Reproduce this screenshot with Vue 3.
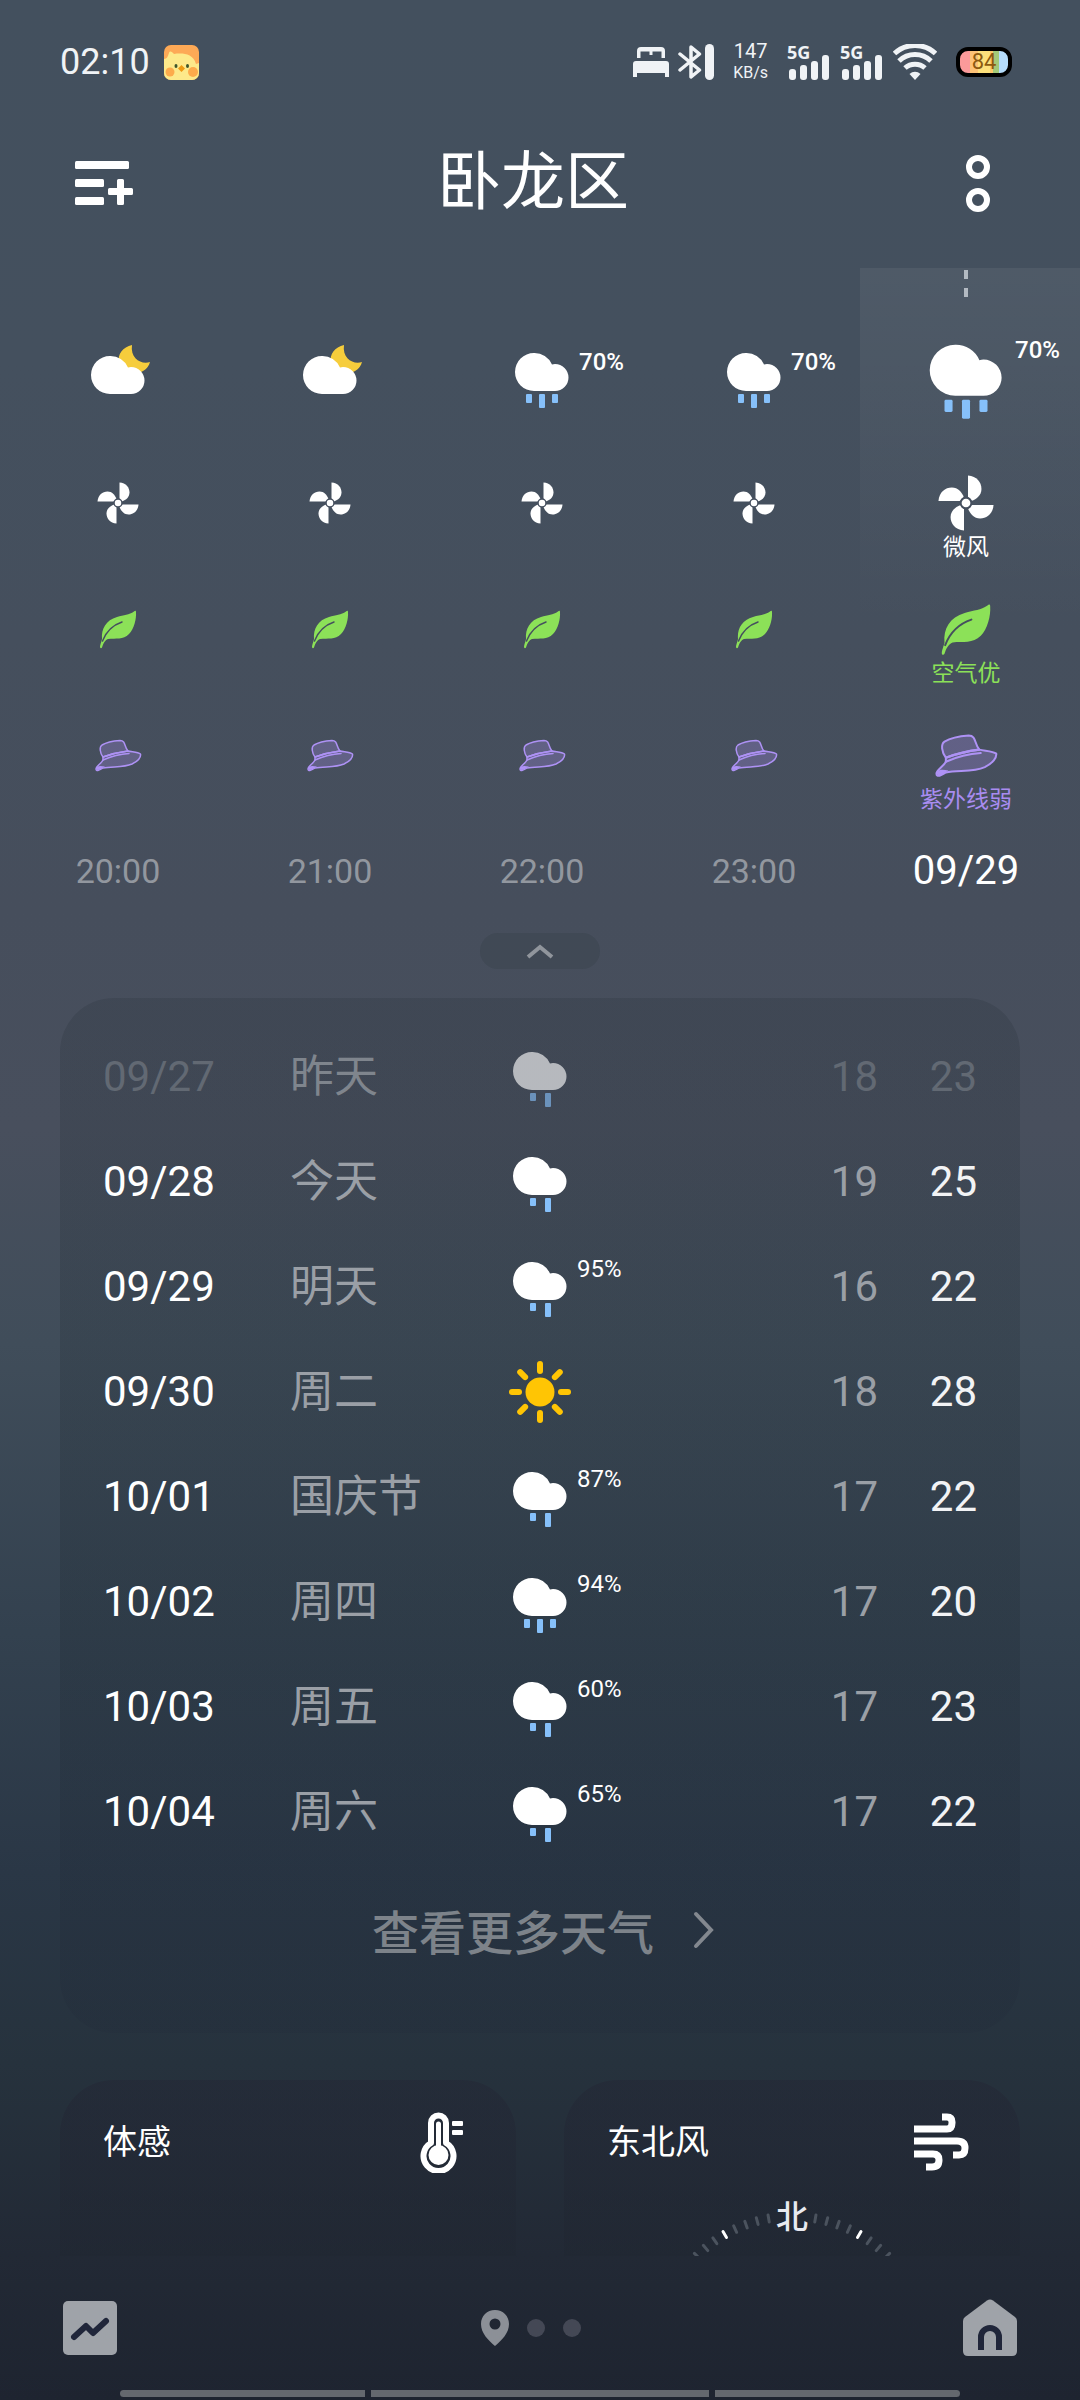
<script setup>
const hours = [
  { time: '20:00', icon: 'night' },
  { time: '21:00', icon: 'night' },
  { time: '22:00', icon: 'rain', chance: '70%' },
  { time: '23:00', icon: 'rain', chance: '70%' },
  { time: '09/29', icon: 'rain', chance: '70%', current: true, wind: '微风', air: '空气优', uv: '紫外线弱' },
]

const days = [
  { date: '09/27', name: '昨天', icon: 'drizzle', low: 18, high: 23, past: true },
  { date: '09/28', name: '今天', icon: 'drizzle', low: 19, high: 25 },
  { date: '09/29', name: '明天', icon: 'drizzle', chance: '95%', low: 16, high: 22 },
  { date: '09/30', name: '周二', icon: 'sun', low: 18, high: 28 },
  { date: '10/01', name: '国庆节', icon: 'drizzle', chance: '87%', low: 17, high: 22 },
  { date: '10/02', name: '周四', icon: 'rain', chance: '94%', low: 17, high: 20 },
  { date: '10/03', name: '周五', icon: 'drizzle', chance: '60%', low: 17, high: 23 },
  { date: '10/04', name: '周六', icon: 'drizzle', chance: '65%', low: 17, high: 22 },
]

// Compass ticks every 5 degrees, leaving room for the north label
const ticks = []
for (let a = 10; a <= 50; a += 5) ticks.push(a, -a)

const rays = [0, 45, 90, 135, 180, 225, 270, 315]
</script>

<template>
  <div class="page">
    <svg class="defs" aria-hidden="true">
      <symbol id="cloud" viewBox="0 0 64 64">
        <path d="M24 8a19 19 0 0 1 18 11.500a14 14 0 0 1 3-.500a13.500 13.500 0 0 1 0 27H24a19 19 0 0 1 0-38z" fill="#fff" />
      </symbol>
      <symbol id="rain" viewBox="0 0 64 64">
        <use href="#cloud" />
        <g fill="#86c0fa">
          <rect x="16" y="49" width="6" height="9" rx="1" />
          <rect x="29" y="49" width="6" height="14" rx="1" />
          <rect x="42" y="49" width="6" height="9" rx="1" />
        </g>
      </symbol>
      <symbol id="drizzle" viewBox="0 0 64 64">
        <use href="#cloud" y="-1" />
        <g fill="#86c0fa">
          <rect x="22" y="48" width="6" height="8" rx="1" />
          <rect x="37" y="48" width="6" height="14" rx="1" />
        </g>
      </symbol>
      <symbol id="night" viewBox="0 0 64 64">
        <path d="M46 0C37 2 31 9 33 18C37 32 60 32 64 17C56 20 44 14 46 0Z" fill="#f6cd3c" />
        <use href="#cloud" y="3" />
      </symbol>
      <symbol id="sun" viewBox="0 0 64 64">
        <circle cx="32" cy="32" r="14.500" fill="#ffc504" />
        <rect v-for="r in rays" :key="r" x="29" y="1" width="6" height="13" rx="3" fill="#ffc504" :transform="`rotate(${r} 32 32)`" />
      </symbol>
      <symbol id="fan" viewBox="0 0 64 64">
        <g fill="#fff">
          <path v-for="r in [0, 90, 180, 270]" :key="r" d="M33.500 11.500C40 12 43.500 16.500 43.500 21.500C43.500 26 40 29 36 30.500L33.500 28Z" :transform="`rotate(${r} 32 32)`" />
          <circle cx="32" cy="32" r="4" stroke="#454f5e" stroke-width="1.500" />
        </g>
      </symbol>
      <symbol id="leaf" viewBox="0 0 64 64">
        <path d="M50 15C50 13.500 49 13.500 48 14.500C43 18 38 18 31 20C20 23 15 32 16 42C15 46 14 48 14 50C14 51.500 15.500 51.500 16 50.500C17 47 19 43 22 42C30 41 37 43 43 37C48 32 50.500 22 50 15Z" fill="#8ce158" />
        <path d="M16.500 44C20 35 27 28 36 25" fill="none" stroke="#454f5e" stroke-width="1.500" stroke-linecap="round" />
      </symbol>
      <symbol id="hat" viewBox="0 0 64 64">
        <g fill="#ad90f2" fill-opacity=".28" stroke="#ae92f5" stroke-width="1.500" stroke-linejoin="round" stroke-linecap="round">
          <path d="M17 34C14 30 13 24 16 22C21 19 27 18 34 17.500C40 17.500 38 24 42 28C34 29 25 31 17 34Z" />
          <path d="M17 34C25 31 34 29 42 28C46 29 52 29 54.500 31C55 34 52 38 46 41C37 45 26 43 17 45C14 47 10 49 10 46C10 43 15 41 17 37Z" />
          <path d="M17 37C26 33 35 31 43 30.500" fill="none" />
        </g>
        <path d="M10 46C11 42 15 43 19 43.500C16 45 12 49 10 46Z" fill="#ae92f5" />
      </symbol>
    </svg>

    <div class="status">
      <div class="status-left">
        <span class="clock">02:10</span>
        <svg width="35" height="35" viewBox="0 0 35 35" aria-hidden="true">
          <rect width="35" height="35" rx="7" fill="#fda956" />
          <path d="M0 14C3 14 4 11 5 8C6 5 8 7 10 9C18 8 29 8 32 19L35 18V28A7 7 0 0 1 28 35H7A7 7 0 0 1 0 28Z" fill="#fde98a" />
          <circle cx="6" cy="27" r="4.500" fill="#fdab4b" />
          <circle cx="29" cy="27" r="5" fill="#fdab4b" />
          <ellipse cx="12" cy="21" rx="1.500" ry="2" fill="#3c552c" />
          <ellipse cx="23.500" cy="21" rx="1.500" ry="2" fill="#3c552c" />
          <path d="M14 23.500L17.500 20L21 23.500L17.500 27Z" fill="#ee9a12" />
        </svg>
      </div>
      <div class="status-right">
        <div class="pair">
          <svg width="36" height="32" viewBox="0 0 36 32" aria-hidden="true" fill="#f0f3f6">
            <path d="M4 12V5A4 4 0 0 1 8 1H28A4 4 0 0 1 32 5V12H28.500V5.500H19.500V9H16.500V5.500H7.500V12Z" />
            <path d="M0 18A3 3 0 0 1 3 15H33A3 3 0 0 1 36 18V31H32V27H4V31H0Z" />
          </svg>
          <svg width="36" height="36" viewBox="0 0 36 36" aria-hidden="true">
            <path d="M2 10L21.500 26L13 33V3L21.500 10L2 26" fill="none" stroke="#f0f3f6" stroke-width="3.500" stroke-linejoin="round" stroke-linecap="round" />
            <rect x="27" width="9" height="36" rx="4.500" fill="#f0f3f6" />
          </svg>
        </div>
        <div class="speed"><span>147</span><small>KB/s</small></div>
        <div class="radios">
          <div v-for="n in 2" :key="n" class="signal">
            <b>5G</b>
            <svg width="42" height="26" viewBox="0 0 42 26" aria-hidden="true" fill="#f0f3f6">
              <rect x="2" y="15" width="7" height="11" rx="3" />
              <rect x="13" y="11" width="7" height="15" rx="3" />
              <rect x="24" y="7" width="7" height="19" rx="3" />
              <rect x="35" y="1" width="7" height="25" rx="3" />
            </svg>
          </div>
          <svg width="44" height="36" viewBox="0 0 44 36" aria-hidden="true" fill="none" stroke="#f0f3f6" stroke-width="5">
            <path d="M1.500 9.500A30 30 0 0 1 42.500 9.500" />
            <path d="M6 17A23 23 0 0 1 38 17" />
            <path d="M12 24A15 15 0 0 1 32 24" />
            <path d="M22 36L16.500 30A8 8 0 0 1 27.500 30Z" fill="#f0f3f6" stroke="none" />
          </svg>
        </div>
        <div class="battery">84</div>
      </div>
    </div>

    <header class="top">
      <button type="button" aria-label="城市管理">
        <svg width="58" height="44" viewBox="0 0 58 44" fill="#fff">
          <rect width="54" height="8" rx="1.500" />
          <rect y="18" width="29" height="8" rx="1.500" />
          <rect y="36" width="29" height="8" rx="1.500" />
          <path d="M42 19.500Q42 18 43.500 18H47.500Q49 18 49 19.500V27H56.500Q58 27 58 28.500V32.500Q58 34 56.500 34H49V42.500Q49 44 47.500 44H43.500Q42 44 42 42.500V34H34.500Q33 34 33 32.500V28.500Q33 27 34.500 27H42Z" />
        </svg>
      </button>
      <h1>卧龙区</h1>
      <button type="button" aria-label="更多">
        <svg width="26" height="58" viewBox="0 0 26 58" fill="none" stroke="#fff" stroke-width="6">
          <circle cx="13" cy="13" r="9" />
          <circle cx="13" cy="46" r="9" />
        </svg>
      </button>
    </header>

    <section class="hours" aria-label="逐小时预报">
      <div v-for="h in hours" :key="h.time" class="hour" :class="{ current: h.current }">
        <i v-if="h.current" class="dash"></i>
        <div class="cell">
          <svg class="icon" viewBox="0 0 64 64"><use :href="'#' + h.icon" /></svg>
          <span v-if="h.chance" class="chance">{{ h.chance }}</span>
        </div>
        <div class="cell">
          <svg class="icon" viewBox="0 0 64 64"><use href="#fan" /></svg>
          <span v-if="h.wind" class="caption">{{ h.wind }}</span>
        </div>
        <div class="cell">
          <svg class="icon" viewBox="0 0 64 64"><use href="#leaf" /></svg>
          <span v-if="h.air" class="caption air">{{ h.air }}</span>
        </div>
        <div class="cell">
          <svg class="icon" viewBox="0 0 64 64"><use href="#hat" /></svg>
          <span v-if="h.uv" class="caption uv">{{ h.uv }}</span>
        </div>
        <div class="time">{{ h.time }}</div>
      </div>
    </section>

    <button type="button" class="collapse" aria-label="收起">
      <svg width="28" height="16" viewBox="0 0 28 16" fill="none" stroke="#90959c" stroke-width="4"><path d="M2 14L14 4L26 14" /></svg>
    </button>

    <section class="card daily">
      <table>
        <colgroup><col class="c-date" /><col class="c-name" /><col class="c-icon" /><col /><col class="c-high" /></colgroup>
        <tbody>
          <tr v-for="d in days" :key="d.date" :class="{ past: d.past }">
            <td class="date">{{ d.date }}</td>
            <td class="name">{{ d.name }}</td>
            <td class="sky">
              <div class="sky-box">
                <svg class="icon" viewBox="0 0 64 64"><use :href="'#' + d.icon" /></svg>
                <span v-if="d.chance" class="chance">{{ d.chance }}</span>
              </div>
            </td>
            <td class="low">{{ d.low }}</td>
            <td class="high">{{ d.high }}</td>
          </tr>
        </tbody>
      </table>
      <button type="button" class="more">
        查看更多天气
        <svg width="22" height="40" viewBox="0 0 22 40" fill="none" stroke="#83888f" stroke-width="4" stroke-linecap="round"><path d="M4 5L19 21L4 37" /></svg>
      </button>
    </section>

    <div class="tiles">
      <section class="card tile">
        <div class="tile-head">
          <h2>体感</h2>
          <svg width="56" height="62" viewBox="0 0 56 62" aria-hidden="true">
            <path d="M14 32V12a7.500 7.500 0 0 1 15 0V32a15 15 0 1 1-15 0z" fill="none" stroke="#fff" stroke-width="6" stroke-linejoin="round" />
            <path d="M21.500 13V40" stroke="#fff" stroke-width="5" stroke-linecap="round" />
            <circle cx="21.500" cy="44" r="10" fill="#fff" />
            <rect x="35" y="10" width="11" height="5" rx="1" fill="#fff" />
            <rect x="35" y="19" width="11" height="5" rx="1" fill="#fff" />
          </svg>
        </div>
      </section>
      <section class="card tile">
        <div class="tile-head">
          <h2>东北风</h2>
          <svg width="64" height="62" viewBox="0 0 64 62" aria-hidden="true" fill="none" stroke="#fff" stroke-width="7" stroke-linejoin="round">
            <path d="M1 18H34Q39 18 39 12V11Q39 6 34 6H29" />
            <path d="M1 30H44Q52 30 52 37Q52 44 46 44H40" />
            <path d="M1 43H20Q26 43 26 49Q26 56 19 56H13" />
          </svg>
        </div>
        <svg class="compass" width="300" height="60" viewBox="0 0 300 60" aria-label="风向">
          <g stroke-width="3" stroke-linecap="round">
            <path v-for="a in ticks" :key="a" d="M150 17V24" :stroke="Math.abs(a) === 30 ? '#fff' : '#4b535e'" :transform="`rotate(${a} 150 155)`" />
          </g>
          <text x="150" y="32" text-anchor="middle">北</text>
        </svg>
      </section>
    </div>

    <nav class="bottom">
      <div class="nav-row">
        <button type="button" aria-label="趋势">
          <svg width="54" height="54" viewBox="0 0 54 54">
            <rect width="54" height="54" rx="5" fill="#9fa3a9" />
            <path d="M11 36L23 25L30 32L43 20" fill="none" stroke="#20263a" stroke-width="6" stroke-linejoin="round" stroke-linecap="round" />
          </svg>
        </button>
        <div class="pages">
          <svg width="28" height="36" viewBox="0 0 28 36"><path fill-rule="evenodd" fill="#8c9097" d="M14 0C6 0 0 6 0 14C0 23 7 30 14 36C21 30 28 23 28 14C28 6 22 0 14 0ZM14 8.500A5.500 5.500 0 1 1 14 19.500A5.500 5.500 0 0 1 14 8.500Z" /></svg>
          <i></i><i></i>
        </div>
        <button type="button" aria-label="首页">
          <svg width="54" height="58" viewBox="0 0 54 58">
            <path d="M24 1.500Q27 -.500 30 1.500L52 18Q54 19.500 54 22V52Q54 57 49 57H5Q0 57 0 52V22Q0 19.500 2 18Z" fill="#9fa3a9" />
            <path d="M18 51V38A9 9 0 0 1 36 38V51" fill="none" stroke="#20263a" stroke-width="6" />
          </svg>
        </button>
      </div>
      <div class="gesture"><i></i><i class="mid"></i><i></i></div>
    </nav>
  </div>
</template>

<style>
body {
  margin: 0;
  background: #1f2430;
}
</style>

<style scoped>
.page {
  display: flex;
  flex-direction: column;
  min-height: 100vh;
  color: #fff;
  font-family: Roboto, 'Noto Sans CJK SC', sans-serif;
  background: linear-gradient(#43505e 0%, #44505e 15%, #464e5c 38%, #484f5d 47%, #404d5a 56%, #33414f 68%, #2a3746 78%, #26323d 86%, #222935 94%, #1e2430 100%);
}
button {
  display: flex;
  align-items: center;
  padding: 0;
  border: 0;
  background: none;
  color: inherit;
  font: inherit;
}
svg {
  display: block;
}
.defs {
  position: absolute;
  width: 0;
  height: 0;
}

.status {
  display: flex;
  justify-content: space-between;
  align-items: center;
  height: 124px;
  padding: 0 68px 0 60px;
  color: #f0f3f6;
}
.status-left {
  display: flex;
  align-items: center;
  gap: 14px;
}
.clock {
  font-size: 36px;
}
.status-right {
  display: flex;
  align-items: center;
  gap: 19px;
}
.pair {
  display: flex;
  align-items: center;
  gap: 9px;
}
.speed {
  display: flex;
  flex-direction: column;
  align-items: center;
  line-height: 22px;
  font-size: 20px;
}
.speed small {
  font-size: 16px;
}
.radios {
  display: flex;
  align-items: center;
  gap: 11px;
}
.signal {
  position: relative;
  padding-top: 10px;
}
.signal b {
  position: absolute;
  top: 0;
  left: 0;
  font-family: 'Open Sans', sans-serif;
  font-size: 18px;
  line-height: 16px;
}
.battery {
  box-sizing: border-box;
  width: 56px;
  height: 30px;
  border: 4px solid #000;
  border-radius: 12px;
  background: linear-gradient(90deg, #fb9a9a 0 20%, #fcc277 20% 38%, #fde07b 38% 62%, #fcc96b 62% 68%, #a3c978 68% 82%, #b5dcfa 82%);
  color: #8b5a10;
  font-size: 22px;
  line-height: 22px;
  text-align: center;
}

.top {
  display: grid;
  grid-template-columns: 1fr auto 1fr;
  align-items: center;
  height: 118px;
  padding: 0 89px 0 75px;
}
.top h1 {
  margin: 0;
  font-size: 64px;
  font-weight: 400;
  line-height: 80px;
}
.top button {
  justify-self: start;
}
.top button:last-child {
  justify-self: end;
}

.hours {
  display: grid;
  grid-template-columns: repeat(4, 212fr) 220fr;
  margin-top: 26px;
  padding-left: 12px;
}
.hour {
  position: relative;
  padding-top: 46px;
}
.current {
  padding-right: 8px;
  background: linear-gradient(rgba(255, 255, 255, 0.06), rgba(255, 255, 255, 0) 360px);
}
.dash {
  position: absolute;
  top: 2px;
  left: calc(50% - 6px);
  width: 4px;
  height: 27px;
  background: repeating-linear-gradient(#b3bac2 0 9px, transparent 9px 18px);
}
.cell {
  position: relative;
  display: grid;
  grid-template-rows: 1fr 60px 1fr;
  height: 126px;
  justify-items: center;
}
.icon {
  width: 64px;
  height: 64px;
}
.cell .icon {
  grid-row: 2;
  align-self: center;
}
.current .icon {
  width: 86px;
  height: 86px;
}
.caption {
  grid-row: 3;
  padding-top: 2px;
  font-size: 23px;
  line-height: 26px;
  white-space: nowrap;
}
.air {
  color: #8ce158;
}
.uv {
  color: #a88cf0;
}
.chance {
  position: absolute;
  left: calc(50% + 37px);
  font-size: 24px;
  line-height: 28px;
}
.cell .chance {
  top: 34px;
  font-weight: 500;
}
.current .chance {
  top: 22px;
  left: calc(50% + 49px);
}
.time {
  padding-top: 29px;
  font-size: 34px;
  line-height: 48px;
  text-align: center;
  color: #92979f;
}
.current .time {
  font-size: 40px;
  color: #fff;
}

.collapse {
  align-self: center;
  justify-content: center;
  width: 120px;
  height: 36px;
  margin: 38px 0 29px;
  border-radius: 18px;
  background: rgba(30, 40, 45, 0.14);
}

.card {
  border-radius: 54px;
}
.daily {
  display: flex;
  flex-direction: column;
  margin: 0 60px;
  padding: 26px 43px 39px;
  background: linear-gradient(rgba(25, 35, 42, 0.16), rgba(25, 35, 42, 0.2) 60%, rgba(32, 40, 56, 0.2));
}
table {
  width: 100%;
  table-layout: fixed;
  border-collapse: collapse;
}
.c-date {
  width: 187px;
}
.c-name {
  width: 190px;
}
.c-icon {
  width: 120px;
}
.c-high {
  width: 99px;
}
td {
  height: 105px;
  padding: 0;
  font-size: 42px;
  line-height: 48px;
}
.name {
  font-size: 44px;
  color: #9a9fa6;
}
.sky-box {
  position: relative;
  display: flex;
  justify-content: center;
}
.sky-box .chance {
  top: 0;
}
.low,
.high {
  text-align: right;
}
.low {
  color: #9a9fa6;
}
.high {
  color: #f2f3f5;
}
.past .date,
.past .low,
.past .high {
  color: #626973;
}
.past .name {
  color: #7f858d;
}
.past .icon {
  opacity: 0.62;
}
.more {
  align-self: center;
  gap: 38px;
  height: 130px;
  margin-left: 6px;
  font-size: 47px;
  font-weight: 500;
  color: #7d838a;
}

.tiles {
  display: flex;
  flex: 1;
  gap: 48px;
  margin: 47px 60px 0;
}
.tile {
  flex: 1;
  min-height: 176px;
  border-radius: 54px 54px 0 0;
  background: linear-gradient(rgba(34, 34, 50, 0.36), rgba(31, 38, 48, 0.4));
  overflow: hidden;
}
.tile-head {
  display: flex;
  justify-content: space-between;
  align-items: center;
  height: 62px;
  padding: 31px 43px 23px;
}
.tile h2 {
  margin: 0;
  font-size: 34px;
  font-weight: 400;
  line-height: 40px;
}
.compass {
  margin: 0 auto;
}
.compass text {
  font-size: 32px;
  font-weight: 500;
  fill: #e8eaf0;
}

.bottom {
  display: flex;
  flex-direction: column;
  height: 144px;
}
.nav-row {
  display: flex;
  flex: 1;
  justify-content: space-between;
  align-items: center;
  padding: 10px 63px 0;
}
.pages {
  display: flex;
  align-items: center;
  gap: 18px;
  margin-right: 18px;
}
.pages i {
  width: 18px;
  height: 18px;
  border-radius: 50%;
  background: #444855;
}
.gesture {
  display: flex;
  gap: 6px;
  margin: 0 120px 3px;
}
.gesture i {
  flex: 245 1 0;
  height: 7px;
  border-radius: 4px 0 0 4px;
  background: #64686e;
}
.gesture .mid {
  flex-grow: 338;
  border-radius: 0;
}
.gesture i:last-child {
  border-radius: 0 4px 4px 0;
}
</style>
